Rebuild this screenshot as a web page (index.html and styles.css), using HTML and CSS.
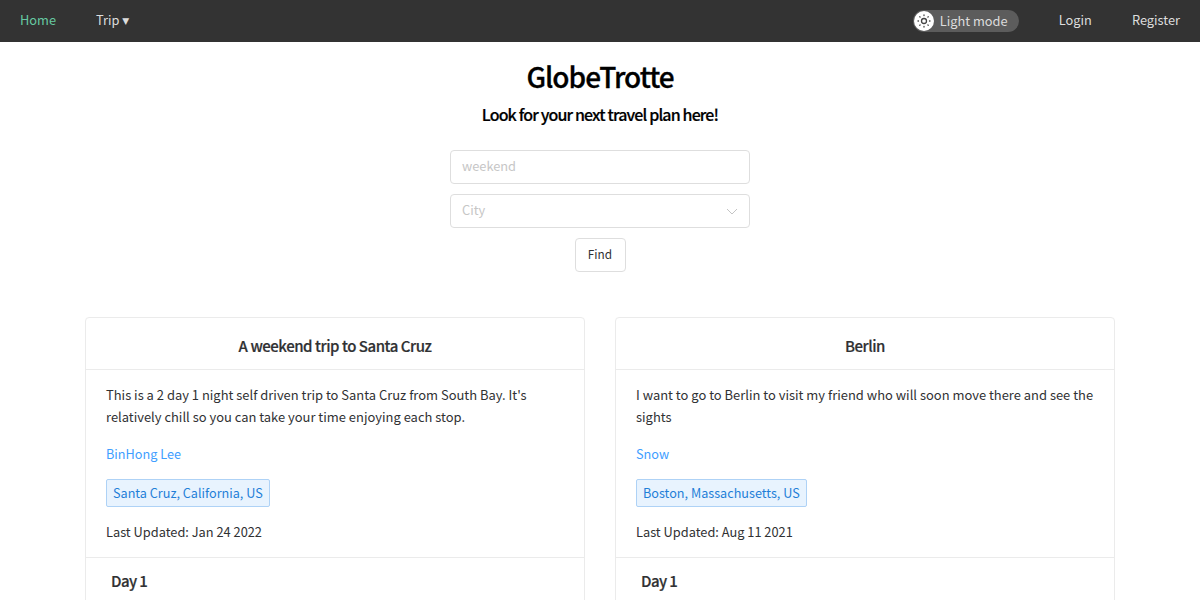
FILE: index.html
```html
<!DOCTYPE html>
<html lang="en">
<head>
  <meta charset="UTF-8" />
  <meta name="viewport" content="width=device-width, initial-scale=1.0"/>
  <title>GlobeTrotte</title>
  <link rel="stylesheet" href="styles.css">
</head>
<body>
  <nav class="navbar">
    <a class="nav-item active" href="#">Home</a>
    <a class="nav-item" href="#">Trip <span class="caret">▼</span></a>
    <div class="nav-right">
      <div class="mode-switch">
        <span class="mode-knob">
          <svg width="18" height="18" viewBox="0 0 18 18" fill="none" stroke="#444" stroke-width="1.300">
            <circle cx="9" cy="9" r="2.500"/>
            <path stroke-linecap="round" d="M9 3v.5M9 14.500v.5M3 9h.5M14.500 9h.5M4.800 4.800l.3.300M12.900 12.900l.3.300M4.800 13.200l.3-.3M12.900 5.100l.3-.3"/>
          </svg>
        </span>
        <span class="mode-label">Light mode</span>
      </div>
      <a class="nav-item" href="#">Login</a>
      <a class="nav-item" href="#">Register</a>
    </div>
  </nav>

  <header class="hero">
    <h1>GlobeTrotte</h1>
    <h2>Look for your next travel plan here!</h2>
  </header>

  <form class="search">
    <input class="field" type="text" placeholder="weekend">
    <div class="field select">
      <span>City</span>
      <svg width="12" height="7" viewBox="0 0 12 7" fill="none" stroke="#c4c4c4" stroke-width="1"><path d="M1 1l5 5 5-5"/></svg>
    </div>
    <button class="find" type="button">Find</button>
  </form>

  <main class="trips">
    <section class="card">
      <div class="card-title">A weekend trip to Santa Cruz</div>
      <div class="card-body">
        <p>This is a 2 day 1 night self driven trip to Santa Cruz from South Bay. It's relatively chill so you can take your time enjoying each stop.</p>
        <a class="author" href="#">BinHong Lee</a>
        <span class="tag">Santa Cruz, California, US</span>
        <p class="updated">Last Updated: Jan 24 2022</p>
      </div>
      <div class="day">Day 1</div>
    </section>
    <section class="card">
      <div class="card-title">Berlin</div>
      <div class="card-body">
        <p>I want to go to Berlin to visit my friend who will soon move there and see the sights</p>
        <a class="author" href="#">Snow</a>
        <span class="tag">Boston, Massachusetts, US</span>
        <p class="updated">Last Updated: Aug 11 2021</p>
      </div>
      <div class="day">Day 1</div>
    </section>
  </main>
</body>
</html>
```

FILE: styles.css
```css
html, body {
  height: 600px;
  overflow: hidden;
}

body {
  margin: 0;
  background: #fff;
  color: #303133;
  font-family: "Noto Sans CJK SC", "Noto Sans", sans-serif;
  font-size: 12.8px;
}

a {
  text-decoration: none;
}

.navbar {
  display: flex;
  align-items: center;
  height: 42px;
  background: #333;
}

.nav-item {
  padding: 0 20px 3px;
  color: #ddd;
  font-size: 12.8px;
}

.nav-item.active {
  color: #66c9a2;
}

.caret {
  font-family: "DejaVu Sans", sans-serif;
  font-size: 9px;
  vertical-align: 1px;
}

.nav-right {
  display: flex;
  align-items: center;
  margin-left: auto;
}

.mode-switch {
  display: flex;
  align-items: center;
  width: 106px;
  height: 22px;
  margin-right: 20px;
  background: #5c5c5c;
  border-radius: 11px;
}

.mode-knob {
  display: flex;
  align-items: center;
  justify-content: center;
  width: 20px;
  height: 20px;
  margin-left: 1px;
  background: #fff;
  border-radius: 50%;
}

.mode-label {
  margin-left: 6px;
  padding-bottom: 2px;
  color: #ddd;
  font-size: 12.8px;
}

.hero {
  text-align: center;
}

h1 {
  margin: 13px 0 0;
  color: #000;
  font-size: 28px;
  line-height: 42px;
  font-weight: 500;
  letter-spacing: -1px;
  -webkit-text-stroke: 0.3px #000;
}

h2 {
  margin: 5px 0 0;
  color: #000;
  font-size: 16px;
  line-height: 24px;
  font-weight: 500;
  letter-spacing: -0.85px;
  -webkit-text-stroke: 0.2px #000;
}

.search {
  display: flex;
  flex-direction: column;
  align-items: center;
  gap: 10px;
  margin-top: 24px;
}

.field {
  box-sizing: border-box;
  width: 300px;
  height: 34px;
  padding: 0 11px 3px;
  border: 1px solid #dedede;
  border-radius: 4px;
  background: #fff;
  color: #606266;
  font-family: inherit;
  font-size: 12.8px;
  outline: none;
}

.field::placeholder,
.select span {
  color: #c6c6c6;
}

.select {
  display: flex;
  align-items: center;
  justify-content: space-between;
}

.select svg {
  margin-top: 3px;
}

.find {
  width: 51px;
  height: 34px;
  padding: 0 0 3px;
  border: 1px solid #dedede;
  border-radius: 4px;
  background: #fff;
  color: #303133;
  font-family: inherit;
  font-size: 11.8px;
}

.trips {
  display: flex;
  justify-content: center;
  gap: 30px;
  margin-top: 45px;
}

.card {
  box-sizing: border-box;
  width: 500px;
  height: 320px;
  border: 1px solid #ebebeb;
  border-radius: 4px;
}

.card-title {
  padding: 18px 20px 14px;
  border-bottom: 1px solid #ebebeb;
  text-align: center;
  font-size: 15px;
  line-height: 19px;
  font-weight: 500;
  letter-spacing: -0.46px;
  -webkit-text-stroke: 0.2px #303133;
}

.card-body {
  padding: 14px 20px 14px;
  border-bottom: 1px solid #ebebeb;
}

.card-body p {
  margin: 0;
  font-size: 12.95px;
  line-height: 22px;
}

.author {
  display: block;
  margin-top: 15px;
  color: #409eff;
  font-size: 12.7px;
  line-height: 22px;
}

.tag {
  display: inline-block;
  margin-top: 14px;
  padding: 0 6px;
  background: #e8f3fe;
  border: 1px solid #aed2f6;
  border-radius: 2px;
  color: #1f7fd8;
  font-size: 12.65px;
  line-height: 26px;
}

.card-body .updated {
  margin-top: 14px;
  font-size: 12.8px;
}

.day {
  padding: 12px 25px;
  font-size: 15px;
  line-height: 22px;
  font-weight: 500;
  letter-spacing: -0.6px;
  -webkit-text-stroke: 0.2px #303133;
}
```
